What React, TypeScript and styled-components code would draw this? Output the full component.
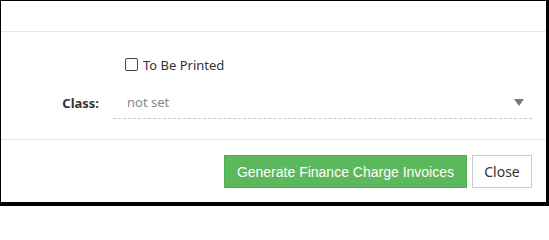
import { useState } from 'react';
import styled, { createGlobalStyle } from 'styled-components';

const GlobalStyle = createGlobalStyle`
  html, body {
    margin: 0;
    padding: 0;
    background: #ffffff;
  }
  * {
    box-sizing: border-box;
  }
`;

export const App = () => {
  const [toBePrinted, setToBePrinted] = useState(false);

  return (
    <>
      <GlobalStyle />
      <Dialog>
        <Header />

        <Body>
          <FormGrid>
            <Spacer />
            <CheckRow>
              <CheckBox
                type="checkbox"
                checked={toBePrinted}
                onChange={() => setToBePrinted((v) => !v)}
              />
              <CheckLabel>To Be Printed</CheckLabel>
            </CheckRow>

            <Label>Class:</Label>
            <Select>
              <Placeholder>not set</Placeholder>
              <Caret />
            </Select>
          </FormGrid>
        </Body>

        <Footer>
          <PrimaryButton>Generate Finance Charge Invoices</PrimaryButton>
          <DefaultButton>Close</DefaultButton>
        </Footer>
      </Dialog>
    </>
  );
};

const Dialog = styled.div`
  width: 549px;
  height: 206px;
  border-style: solid;
  border-color: #000;
  border-width: 1px 3px 4px 1px;
  background: #fff;
  display: flex;
  flex-direction: column;
  font-family: 'Noto Sans', 'Open Sans', sans-serif;
  color: #333;
`;
//-----------------------------------------------------------
const Header = styled.div`
  height: 31px;
  border-bottom: 1px solid #e5e5e5;
  flex-shrink: 0;
`;

const Body = styled.div`
  padding: 22px 14px 20px 0;
  border-bottom: 1px solid #e5e5e5;
`;

const FormGrid = styled.div`
  display: grid;
  grid-template-columns: 112px 1fr;
  row-gap: 11px;
  align-items: center;
`;

const Spacer = styled.div``;

const CheckRow = styled.label`
  display: flex;
  align-items: center;
  gap: 5px;
  height: 21px;
  padding-left: 12px;
  cursor: pointer;
`;

const CheckBox = styled.input`
  appearance: none;
  margin: 0;
  width: 13px;
  height: 13px;
  border: 1px solid #444;
  border-radius: 2px;
  background: #fff;
  cursor: pointer;

  &:checked {
    background: #5cb85c;
    border-color: #4cae4c;
  }
`;

const CheckLabel = styled.span`
  font-size: 13px;
  color: #333;
`;

const Label = styled.div`
  text-align: right;
  padding-right: 14px;
  font-size: 13px;
  font-weight: 700;
  color: #333;
`;

const Select = styled.div`
  height: 33px;
  display: flex;
  align-items: center;
  justify-content: space-between;
  padding: 0 8px 0 14px;
  border-bottom: 1px dashed #c8c8c8;
`;

const Placeholder = styled.span`
  font-size: 13px;
  color: #888;
`;

const Caret = styled.span`
  width: 0;
  height: 0;
  border-left: 5px solid transparent;
  border-right: 5px solid transparent;
  border-top: 7px solid #7a7a7a;
`;
// ------------------------------------------------------

const Footer = styled.div`
  display: flex;
  justify-content: flex-end;
  align-items: flex-start;
  gap: 5px;
  padding: 15px 14px 0 0;
`;

const PrimaryButton = styled.button`
  height: 33px;
  padding: 0 12px;
  background-color: #5cb85c;
  border: 1px solid #4cae4c;
  color: #fff;
  font-family: 'Liberation Sans', Arial, sans-serif;
  font-size: 14px;
  cursor: pointer;
`;

const DefaultButton = styled.button`
  height: 33px;
  width: 60px;
  padding: 0;
  background-color: #fff;
  border: 1px solid #ccc;
  color: #333;
  font-family: 'Noto Sans', 'Open Sans', sans-serif;
  font-size: 14px;
  cursor: pointer;
`;

export default App;
